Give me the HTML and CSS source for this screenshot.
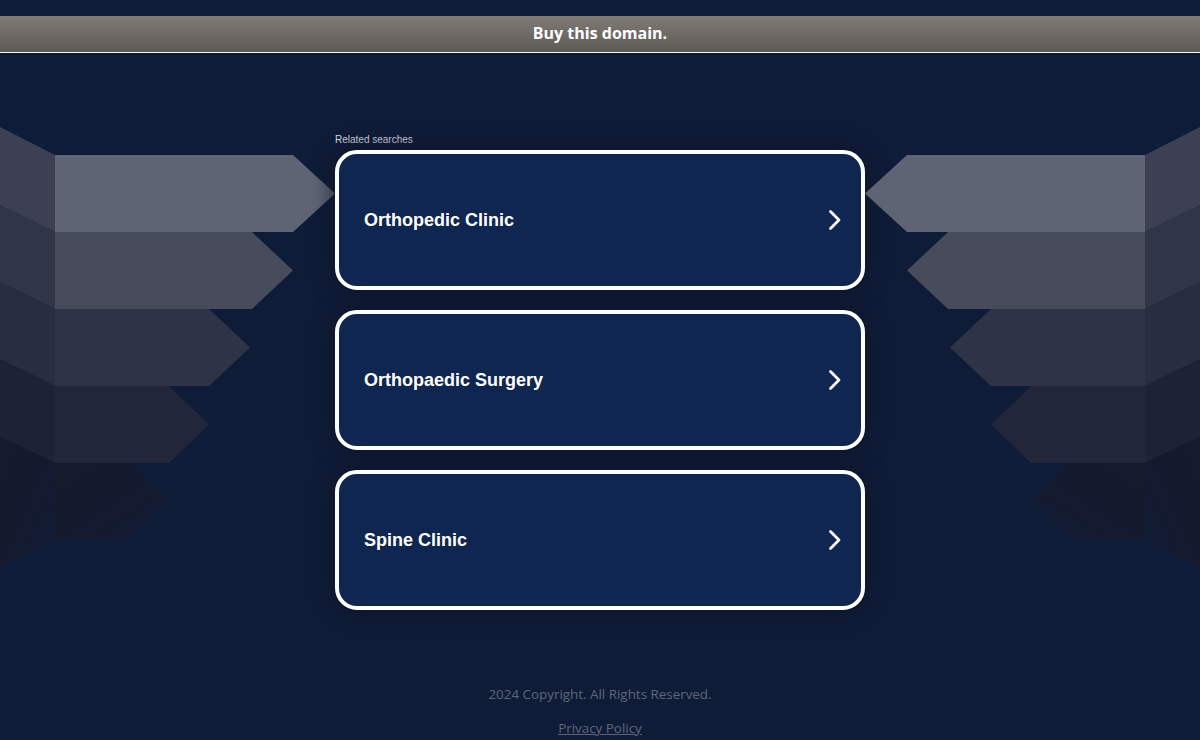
FILE: index.html
```html
<!DOCTYPE html>
<html lang="en">
<head>
<meta charset="utf-8">
<title>Buy this domain</title>
<link rel="stylesheet" href="styles.css">
</head>
<body>
<div class="banner">Buy this domain.</div>
<main class="stage">
  <div class="deco">
    <svg class="fan" viewBox="0 120 335 460" width="335" height="460" aria-hidden="true">
      <defs>
        <linearGradient id="fadeL" x1="0" y1="0" x2="1" y2="1">
          <stop offset="0" stop-color="#151a2c"/>
          <stop offset="0.6" stop-color="#141a2f"/>
          <stop offset="1" stop-color="#0f1c38"/>
        </linearGradient>
      </defs>
      <polygon points="0,436 55,463 55,540 0,566" fill="url(#fadeL)"/>
      <polygon points="55,463 129,463 170,501.5 129,540 55,540" fill="url(#fadeL)"/>
      <polygon points="0,359 55,386 55,463 0,436" fill="#1e2235"/>
      <polygon points="0,282 55,309 55,386 0,359" fill="#292d40"/>
      <polygon points="0,205 55,232 55,309 0,282" fill="#313548"/>
      <polygon points="0,127 55,155 55,232 0,205" fill="#3c4052"/>
      <polygon points="55,155 293,155 335,193.5 293,232 55,232" fill="#5f6475"/>
      <polygon points="55,232 252,232 293,270.5 252,309 55,309" fill="#474b5c"/>
      <polygon points="55,309 209,309 250,347.5 209,386 55,386" fill="#2f3346"/>
      <polygon points="55,386 169,386 209,424.5 169,463 55,463" fill="#22263a"/>
    </svg>
  </div>
  <section class="results">
    <p class="label">Related searches</p>
    <ul class="cards">
      <li><a class="card" href="#"><span>Orthopedic Clinic</span><svg class="chev" viewBox="0 0 14 22" width="14" height="22"><polyline points="2.5,2.5 11,11 2.5,19.5"/></svg></a></li>
      <li><a class="card" href="#"><span>Orthopaedic Surgery</span><svg class="chev" viewBox="0 0 14 22" width="14" height="22"><polyline points="2.5,2.5 11,11 2.5,19.5"/></svg></a></li>
      <li><a class="card" href="#"><span>Spine Clinic</span><svg class="chev" viewBox="0 0 14 22" width="14" height="22"><polyline points="2.5,2.5 11,11 2.5,19.5"/></svg></a></li>
    </ul>
  </section>
  <div class="deco">
    <svg class="fan mirror" viewBox="0 120 335 460" width="335" height="460" aria-hidden="true">
      <defs>
        <linearGradient id="fadeR" x1="0" y1="0" x2="1" y2="1">
          <stop offset="0" stop-color="#151a2c"/>
          <stop offset="0.6" stop-color="#141a2f"/>
          <stop offset="1" stop-color="#0f1c38"/>
        </linearGradient>
      </defs>
      <polygon points="0,436 55,463 55,540 0,566" fill="url(#fadeR)"/>
      <polygon points="55,463 129,463 170,501.5 129,540 55,540" fill="url(#fadeR)"/>
      <polygon points="0,359 55,386 55,463 0,436" fill="#1e2235"/>
      <polygon points="0,282 55,309 55,386 0,359" fill="#292d40"/>
      <polygon points="0,205 55,232 55,309 0,282" fill="#313548"/>
      <polygon points="0,127 55,155 55,232 0,205" fill="#3c4052"/>
      <polygon points="55,155 293,155 335,193.5 293,232 55,232" fill="#5f6475"/>
      <polygon points="55,232 252,232 293,270.5 252,309 55,309" fill="#474b5c"/>
      <polygon points="55,309 209,309 250,347.5 209,386 55,386" fill="#2f3346"/>
      <polygon points="55,386 169,386 209,424.5 169,463 55,463" fill="#22263a"/>
    </svg>
  </div>
</main>
<footer class="footer">
  <p class="copy">2024 Copyright. All Rights Reserved.</p>
  <a class="privacy" href="#">Privacy Policy</a>
</footer>
</body>
</html>
```

FILE: styles.css
```css
html, body {
  margin: 0;
  padding: 0;
}
body {
  background: #0f1c38;
  width: 1200px;
  height: 740px;
  overflow: hidden;
  font-family: "Liberation Sans", Arial, sans-serif;
}
.banner {
  margin-top: 16px;
  height: 37px;
  line-height: 35px;
  box-sizing: border-box;
  border-bottom: 1px solid #f2f2f2;
  background: linear-gradient(to bottom, #807b76, #5d5955);
  color: #fff;
  text-align: center;
  font-family: "Open Sans", sans-serif;
  font-weight: 700;
  font-size: 16px;
}
.stage {
  margin-top: 67px;
  display: grid;
  grid-template-columns: 335px 530px 335px;
  height: 490px;
}
.deco {
  display: flex;
  align-items: flex-start;
}
.fan {
  display: block;
}
.mirror {
  transform: scaleX(-1);
}
.results {
  padding-top: 14px;
}
.label {
  margin: 0 0 4px;
  font-size: 10px;
  line-height: 12px;
  color: #dcdee6;
}
.cards {
  list-style: none;
  margin: 0;
  padding: 0;
  display: flex;
  flex-direction: column;
  gap: 20px;
}
.card {
  box-sizing: border-box;
  height: 140px;
  border: 4px solid #fff;
  border-radius: 22px;
  background: #0f2650;
  box-shadow: 0 0 18px 6px rgba(14, 20, 38, 0.55);
  display: flex;
  align-items: center;
  justify-content: space-between;
  padding: 0 19px 0 25px;
  color: #fff;
  text-decoration: none;
  font-weight: 700;
  font-size: 18px;
}
.chev {
  display: block;
  fill: none;
  stroke: #fff;
  stroke-width: 2.8;
  stroke-linecap: round;
  stroke-linejoin: round;
}
.footer {
  margin-top: 75px;
  text-align: center;
  font-family: "Open Sans", sans-serif;
  font-size: 13.4px;
  line-height: 18px;
  color: #5f6678;
}
.copy {
  margin: 0 0 16px;
}
.privacy {
  color: #5f6678;
  text-decoration: underline;
}
```
